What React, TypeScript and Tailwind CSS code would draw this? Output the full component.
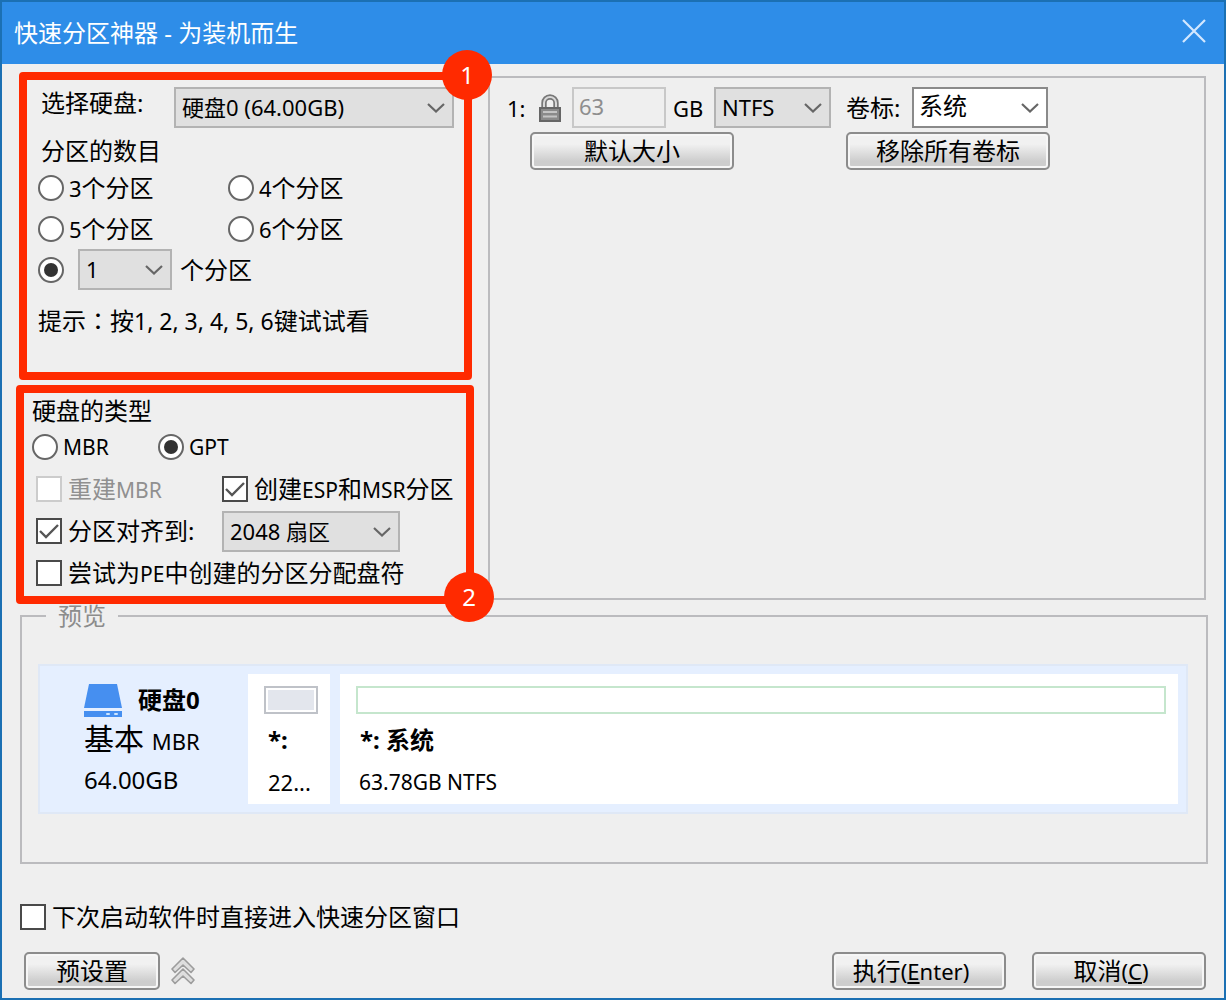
import type { ReactNode, ComponentProps } from "react";

const Latin = ({ children }: { children: ReactNode }) => (
  <span className="text-[22px]">{children}</span>
);

const Caps = ({ children }: { children: ReactNode }) => (
  <span className="text-[21px]">{children}</span>
);

const Radio = (props: ComponentProps<"input">) => (
  <input
    type="radio"
    className="flex h-[26px] w-[26px] shrink-0 appearance-none items-center justify-center rounded-full border-2 border-[#666] bg-white checked:before:h-[14px] checked:before:w-[14px] checked:before:rounded-full checked:before:bg-[#333]"
    {...props}
  />
);

const Checkbox = (props: ComponentProps<"input">) => (
  <span className="relative flex h-[26px] w-[26px] shrink-0">
    <input
      type="checkbox"
      className="peer h-[26px] w-[26px] appearance-none border-2 border-[#4a4a4a] bg-white disabled:border-[#ccc]"
      {...props}
    />
    <svg
      viewBox="0 0 26 26"
      className="pointer-events-none absolute inset-0 hidden peer-checked:block"
      fill="none"
      stroke="#555"
      strokeWidth="2.4"
    >
      <path d="M4 13 L10 19 L22 7" />
    </svg>
  </span>
);

type DropdownProps = ComponentProps<"select"> & {
  options: string[];
  width: string;
  light?: boolean;
};

const Dropdown = ({ options, width, light, ...rest }: DropdownProps) => (
  <span className={`relative block h-[41px] shrink-0 ${width}`}>
    <select
      className={`h-full w-full appearance-none border-2 pr-8 leading-8 ${
        light
          ? "border-[#8a8a8a] bg-white pb-[3px] pl-[5px] text-2xl"
          : "border-[#b3b3b3] bg-[#e0e0e0] pb-px pl-[6px] text-[22px]"
      }`}
      {...rest}
    >
      {options.map((option) => (
        <option key={option}>{option}</option>
      ))}
    </select>
    <svg
      viewBox="0 0 18 10"
      className="pointer-events-none absolute right-[9px] top-4 h-[10px] w-[18px]"
      fill="none"
      stroke="#666"
      strokeWidth="2.2"
    >
      <path d="M1 1 L9 8.5 L17 1" />
    </svg>
  </span>
);

const Button = ({ width, children }: { width: string; children: ReactNode }) => (
  <button
    type="button"
    className={`h-[38px] rounded-[5px] border-2 border-[#8c8c8c] bg-linear-to-b from-[#f1f1f1] from-30% to-[#cdcdcd] to-80% text-2xl leading-8 shadow-[inset_0_0_0_2px_#f6f6f6] ${width}`}
  >
    {children}
  </button>
);

const Badge = ({ place, children }: { place: string; children: ReactNode }) => (
  <span
    className={`absolute -right-7 z-10 flex h-[50px] w-[50px] items-center justify-center rounded-full bg-[#ff2a00] text-2xl text-white ${place}`}
  >
    {children}
  </span>
);

const LockIcon = () => (
  <svg viewBox="0 0 22 28" className="h-7 w-[22px]" fill="none">
    <path d="M5 14 V9 a6 6 0 0 1 12 0 V14" stroke="#777" strokeWidth="5.4" />
    <path d="M5 14 V9 a6 6 0 0 1 12 0 V14" stroke="#d8d8d8" strokeWidth="2" />
    <rect x="1" y="14" width="20" height="13" fill="#8a8a8a" stroke="#666" strokeWidth="2" />
    <path d="M4 18 H18 M4 22.5 H18" stroke="#c4c4c4" strokeWidth="2" />
  </svg>
);

const DiskIcon = () => (
  <svg viewBox="0 0 38 33" className="h-[33px] w-[38px]">
    <path d="M5 0 H33 L38 24 H0 Z" fill="#468ff0" />
    <rect y="27" width="38" height="6" fill="#468ff0" />
    <rect x="22" y="29" width="4" height="2" rx="1" fill="#cfe6ff" />
    <rect x="30" y="29" width="4" height="2" rx="1" fill="#cfe6ff" />
  </svg>
);

const CollapseIcon = () => (
  <svg
    viewBox="0 0 24 28"
    className="h-7 w-6"
    fill="#dedede"
    stroke="#9c9c9c"
    strokeWidth="1.6"
    strokeLinejoin="round"
  >
    <path d="M12 1 L23 12 L20 15.5 L12 8 L4 15.5 L1 12 Z" />
    <path d="M12 12 L23 23 L20 26.5 L12 19 L4 26.5 L1 23 Z" />
  </svg>
);

const PartitionCount = () => (
  <section className="relative ml-[3px] mr-[2px] rounded border-8 border-[#ff2a00] pb-[35px] pl-[11px] pt-[7px]">
    <Badge place="-top-[30px]">1</Badge>
    <div className="flex">
      <label htmlFor="disk" className="w-[136px] pl-[3px]">
        选择硬盘:
      </label>
      <Dropdown id="disk" width="w-[280px]" options={["硬盘0 (64.00GB)"]} />
    </div>
    <h2 className="mt-[7px] pl-[3px]">分区的数目</h2>
    <div className="grid grid-cols-[190px_1fr]">
      {[3, 4, 5, 6].map((count) => (
        <label key={count} className="flex h-[41px] items-center gap-[5px]">
          <Radio name="count" />
          <span>
            <Latin>{count}</Latin>个分区
          </span>
        </label>
      ))}
    </div>
    <div className="flex h-[41px] items-center">
      <Radio name="count" id="custom" defaultChecked />
      <span className="ml-[14px]">
        <Dropdown
          width="w-[94px]"
          aria-label="个分区"
          options={["1", "2", "3", "4", "5", "6"]}
        />
      </span>
      <label htmlFor="custom" className="ml-2">
        个分区
      </label>
    </div>
    <p className="mt-[14px]">
      提示<span className="font-['Noto_Sans_CJK_TC']">：</span>按
      <span className="text-[23px]">1, 2, 3, 4, 5, 6</span>键试试看
    </p>
  </section>
);

const DiskType = () => (
  <section className="relative mt-[5px] rounded border-8 border-[#ff2a00] pb-[2px] pl-2">
    <Badge place="-bottom-[26px]">2</Badge>
    <h2 className="leading-9">硬盘的类型</h2>
    <div className="mb-[3px] grid grid-cols-[126px_1fr]">
      {["MBR", "GPT"].map((type) => (
        <label key={type} className="flex h-9 items-center gap-[5px]">
          <Radio name="type" defaultChecked={type === "GPT"} />
          <Caps>{type}</Caps>
        </label>
      ))}
    </div>
    <div className="grid grid-cols-[186px_1fr] pl-1">
      <label className="flex h-[42px] items-center gap-[6px] text-[#909090]">
        <Checkbox disabled />
        <span>
          重建<Caps>MBR</Caps>
        </span>
      </label>
      <label className="flex h-[42px] items-center gap-[6px] whitespace-nowrap">
        <Checkbox defaultChecked />
        <span>
          创建<Caps>ESP</Caps>和<Caps>MSR</Caps>分区
        </span>
      </label>
      <label className="flex h-[42px] items-center gap-[6px]">
        <Checkbox defaultChecked />
        分区对齐到:
      </label>
      <div className="flex items-center">
        <Dropdown width="w-[178px]" aria-label="分区对齐到" options={["2048 扇区"]} />
      </div>
      <label className="col-span-2 flex h-[42px] items-center gap-[6px]">
        <Checkbox />
        <span>
          尝试为<Caps>PE</Caps>中创建的分区分配盘符
        </span>
      </label>
    </div>
  </section>
);

const PartitionList = () => (
  <section className="my-1 ml-[14px] flex-1 border-2 border-[#bbbbbe] pl-[17px] pt-[9px]">
    <div className="flex items-center">
      <label htmlFor="size" className="w-8 text-[22px]">
        1:
      </label>
      <LockIcon />
      <input
        id="size"
        disabled
        defaultValue="63"
        className="ml-[11px] h-[41px] w-[94px] border-2 border-[#c8c8c8] pb-1 pl-[5px] text-[22px] text-[#8e8e8e]"
      />
      <span className="w-12 pl-[7px] text-[22px]">GB</span>
      <Dropdown width="w-[117px]" aria-label="文件系统" options={["NTFS", "FAT32"]} />
      <label htmlFor="volume" className="w-[81px] pl-[15px]">
        卷标:
      </label>
      <Dropdown id="volume" light width="w-[136px]" options={["系统"]} />
    </div>
    <div className="mt-1 flex gap-28 pl-[23px]">
      <Button width="w-[204px]">默认大小</Button>
      <Button width="w-[204px]">移除所有卷标</Button>
    </div>
  </section>
);

const Preview = () => (
  <fieldset className="ml-1 border-2 border-[#bbbbbe] pb-12 pl-4 pr-[18px]">
    <legend className="ml-2 px-3 leading-6 text-[#8c8c8c]">预览</legend>
    <div className="mt-9 flex gap-[10px] border-2 border-[#dfe8f6] bg-[#e5efff] p-2 leading-10">
      <div className="w-[190px] pl-9 pt-2">
        <div className="flex items-center gap-4 font-bold leading-9">
          <DiskIcon />
          <span>硬盘0</span>
        </div>
        <p className="text-[30px] leading-[42px]">
          基本 <Latin>MBR</Latin>
        </p>
        <p className="leading-9">64.00GB</p>
      </div>
      <div className="h-[130px] w-[82px] bg-white pl-4 pr-3 pt-3">
        <div className="h-7 border-2 border-[#bfc2c8] bg-[#e3e6ed] shadow-[inset_0_0_0_2px_#fff]" />
        <p className="pl-1 pt-[6px] font-bold">*:</p>
        <p className="pl-1 pt-[2px] text-[22px] leading-10">22...</p>
      </div>
      <div className="h-[130px] flex-1 bg-white pl-4 pr-3 pt-3">
        <div className="h-7 border-2 border-[#c5e6cd]" />
        <p className="pl-1 pt-[6px] font-bold">*: 系统</p>
        <p className="pl-[3px] pt-[2px] text-[21px] leading-10">63.78GB NTFS</p>
      </div>
    </div>
  </fieldset>
);

export default function App() {
  return (
    <div className="flex min-h-screen flex-col border-2 border-[#1b70b3] bg-[#efefef] font-['Noto_Sans','Noto_Sans_CJK_SC',sans-serif] text-2xl leading-8 text-black">
      <header className="flex h-[62px] items-center justify-between bg-[#2e8de8] pl-3 pr-[18px] text-white">
        <h1>快速分区神器 - 为装机而生</h1>
        <button type="button" aria-label="关闭" className="pb-1">
          <svg viewBox="0 0 24 24" className="h-6 w-6" stroke="#d3e8ff" strokeWidth="2.2">
            <path d="M1 1 L23 23 M23 1 L1 23" />
          </svg>
        </button>
      </header>
      <main className="flex flex-1 flex-col pl-[14px] pr-4 pt-2">
        <div className="relative z-10 mr-[2px] flex">
          <div className="w-[458px] shrink-0">
            <PartitionCount />
            <DiskType />
          </div>
          <PartitionList />
        </div>
        <Preview />
        <footer className="mt-auto pb-2 pl-1">
          <label className="flex items-center gap-[6px]">
            <Checkbox />
            下次启动软件时直接进入快速分区窗口
          </label>
          <div className="mt-[19px] flex items-center pl-1 pr-[2px]">
            <Button width="w-[136px]">预设置</Button>
            <button type="button" aria-label="收起" className="ml-[11px]">
              <CollapseIcon />
            </button>
            <div className="ml-auto flex gap-[26px]">
              <Button width="w-[174px]">
                <span className="pr-4">
                  执行
                  <Latin>
                    (<u>E</u>nter)
                  </Latin>
                </span>
              </Button>
              <Button width="w-[174px]">
                <span className="pr-4">
                  取消
                  <Latin>
                    (<u>C</u>)
                  </Latin>
                </span>
              </Button>
            </div>
          </div>
        </footer>
      </main>
    </div>
  );
}
